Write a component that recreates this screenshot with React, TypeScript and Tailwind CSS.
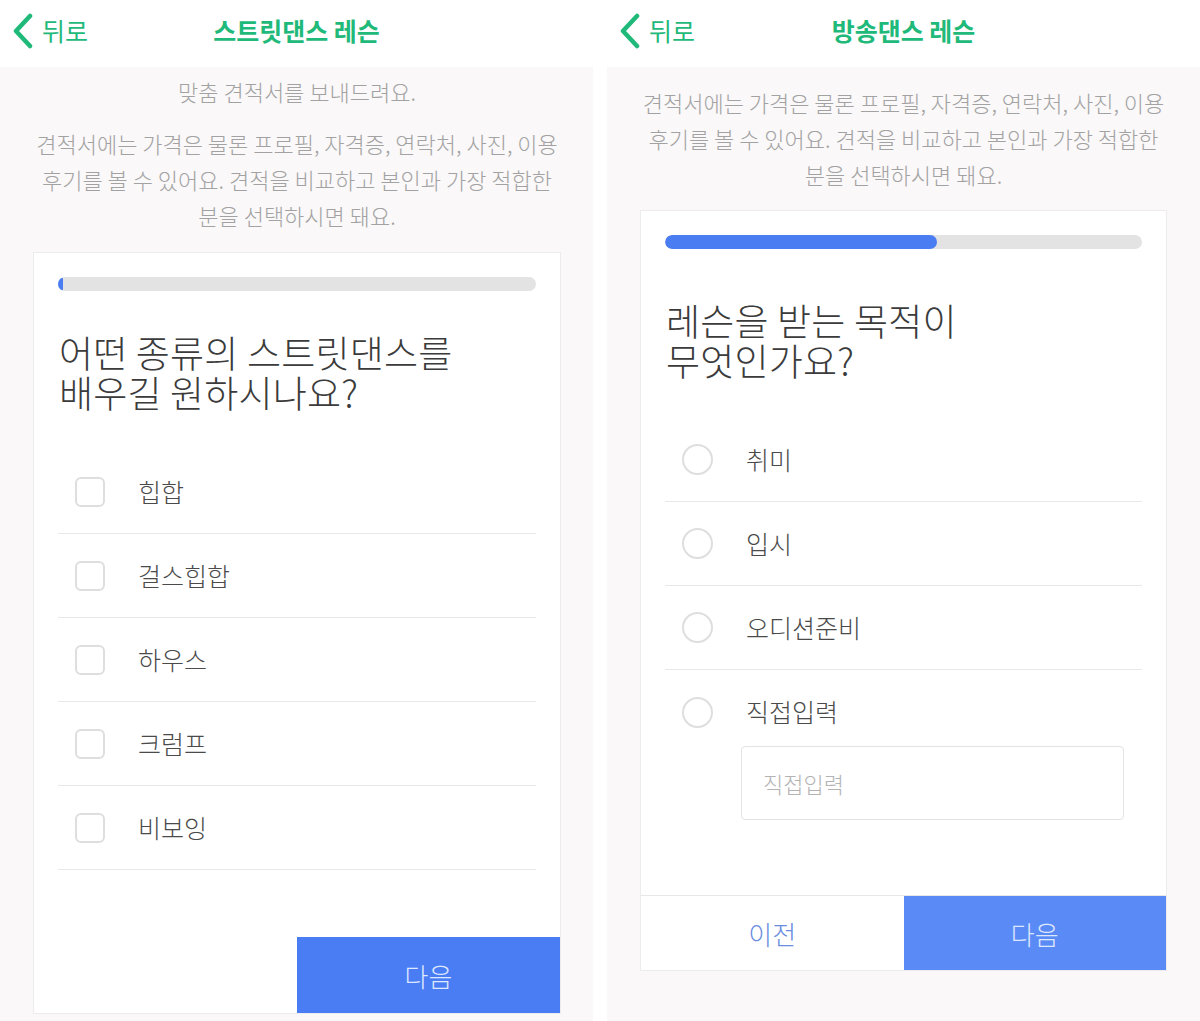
import React from 'react';

const FONT = { fontFamily: '"Noto Sans CJK KR", "Noto Sans", sans-serif' };

function BackChevron() {
  return (
    <svg width="22" height="36" viewBox="0 0 22 36" className="shrink-0">
      <polyline
        points="18,3 4,18 18,33"
        fill="none"
        stroke="#1fb97a"
        strokeWidth="4.5"
        strokeLinecap="round"
        strokeLinejoin="round"
      />
    </svg>
  );
}

function Header({ title }: { title: string }) {
  return (
    <div className="h-[67px] bg-white grid grid-cols-[1fr_auto_1fr] items-center pb-[6px]">
      <div className="flex items-center pl-[12px] gap-[8px]">
        <BackChevron />
        <span className="text-[25px] text-[#1fb97a] leading-none">뒤로</span>
      </div>
      <div className="text-[25px] font-bold text-[#1fb97a] leading-none">{title}</div>
      <div />
    </div>
  );
}

function ProgressBar({ pct }: { pct: number }) {
  return (
    <div className="h-[14px] rounded-full bg-[#e3e3e3] overflow-hidden">
      <div className="h-full rounded-full bg-[#4a7cf2]" style={{ width: `${pct}%` }} />
    </div>
  );
}

function Intro() {
  return (
    <p className="text-[22px] leading-[36px] text-[#a2a2a2] text-center font-light">
      견적서에는 가격은 물론 프로필, 자격증, 연락처, 사진, 이용
      <br />
      후기를 볼 수 있어요. 견적을 비교하고 본인과 가장 적합한
      <br />
      분을 선택하시면 돼요.
    </p>
  );
}

function Question({ lines, className }: { lines: string[]; className: string }) {
  return (
    <div className={className}>
      {lines.map((l) => (
        <div key={l} className="h-[40px] flex items-center pl-[1px] text-[37px] leading-[40px] tracking-[0.2px] text-[#3b3b3b] font-light whitespace-nowrap">
          {l}
        </div>
      ))}
    </div>
  );
}

function StreetPanel() {
  const options = ['힙합', '걸스힙합', '하우스', '크럼프', '비보잉'];
  return (
    <div className="w-[593px] flex flex-col">
      <Header title="스트릿댄스 레슨" />
      <div className="flex-1 bg-[#faf8f9] pl-[33px] pr-[32px] pt-[6px]">
        <p className="text-[22px] leading-[36px] text-[#a2a2a2] text-center font-light">
          맞춤 견적서를 보내드려요.
        </p>
        <div className="mt-[16px]">
          <Intro />
        </div>
        <div className="mt-[19px] bg-white border border-[#ececec]">
          <div className="px-[24px] pt-[24px]">
            <ProgressBar pct={1} />
            <Question className="mt-[41px]" lines={['어떤 종류의 스트릿댄스를', '배우길 원하시나요?']} />
            <div className="mt-[38px]">
              {options.map((o) => (
                <div key={o} className="h-[84px] flex items-center border-b border-[#e8e8e8]">
                  <div className="ml-[17px] w-[30px] h-[30px] rounded-[6px] border-2 border-[#dedede]" />
                  <span className="ml-[33px] text-[25px] text-[#4a4a4a] font-light">{o}</span>
                </div>
              ))}
            </div>
          </div>
          <div className="mt-[67px] h-[76px] flex">
            <div className="flex-1" />
            <button className="flex-1 bg-[#4a7cf4] text-[#dde7fd] text-[26px] font-light">다음</button>
          </div>
        </div>
      </div>
    </div>
  );
}

function BroadcastPanel() {
  const options = ['취미', '입시', '오디션준비'];
  return (
    <div className="w-[593px] flex flex-col">
      <Header title="방송댄스 레슨" />
      <div className="flex-1 bg-[#faf8f9] px-[33px] pt-[17px]">
        <Intro />
        <div className="mt-[18px] bg-white border border-[#ececec]">
          <div className="px-[24px] pt-[24px]">
            <ProgressBar pct={57} />
            <Question className="mt-[51px]" lines={['레슨을 받는 목적이', '무엇인가요?']} />
            <div className="mt-[38px]">
              {options.map((o) => (
                <div key={o} className="h-[84px] flex items-center border-b border-[#e8e8e8]">
                  <div className="ml-[17px] w-[31px] h-[31px] rounded-full border-2 border-[#dedede]" />
                  <span className="ml-[33px] text-[25px] text-[#4a4a4a] font-light">{o}</span>
                </div>
              ))}
              <div className="pt-[27px]">
                <div className="h-[30px] flex items-center">
                  <div className="ml-[17px] w-[31px] h-[31px] rounded-full border-2 border-[#dedede]" />
                  <span className="ml-[33px] text-[25px] text-[#4a4a4a] font-light">직접입력</span>
                </div>
                <div className="mt-[19px] ml-[76px] mr-[18px] h-[74px] rounded-[4px] border border-[#e3e3e3] flex items-center px-[21px]">
                  <span className="text-[22px] text-[#b3b3b3] font-light">직접입력</span>
                </div>
              </div>
            </div>
          </div>
          <div className="mt-[75px] h-[75px] flex border-t border-[#e8e8e8]">
            <button className="flex-1 bg-white text-[#6a8de0] text-[26px] font-light">이전</button>
            <button className="flex-1 bg-[#5a8af6] text-[#dde7fd] text-[26px] font-light">다음</button>
          </div>
        </div>
      </div>
    </div>
  );
}

export default function App() {
  return (
    <div className="w-[1200px] h-[1021px] overflow-hidden bg-white flex gap-[14px]" style={FONT}>
      <StreetPanel />
      <BroadcastPanel />
    </div>
  );
}
